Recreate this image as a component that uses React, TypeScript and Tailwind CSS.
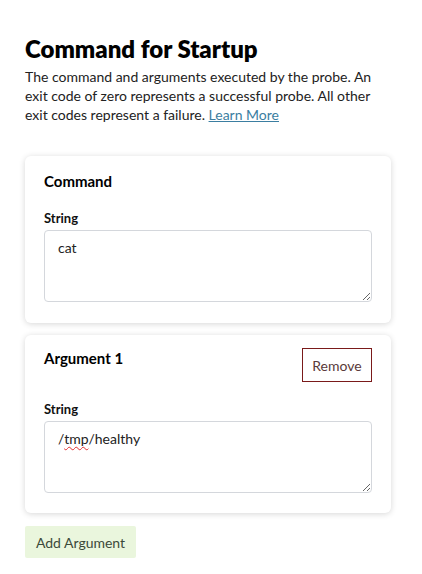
import React from "react";

function Field({ children }: { children: React.ReactNode }) {
  return (
    <div className="flex flex-col">
      <div className="text-[13px] font-bold text-[#111] leading-[18px] mb-[3px]">String</div>
      <div className="h-[72px] w-full resize overflow-auto rounded-[4px] border border-[#d4d7dc] bg-white px-[13px] pt-[7px] text-[14px] text-[#222] leading-[20px]">
        {children}
      </div>
    </div>
  );
}

export default function App() {
  return (
    <div className="min-h-[574px] bg-white pl-[25px] pr-[31px] pt-[34px] pb-4" style={{ fontFamily: "Lato, 'Noto Sans', sans-serif" }}>
      <h1 className="text-[24px] font-extrabold leading-[30px] text-black">Command for Startup</h1>
      <p className="mt-[3px] text-[14px] leading-[19px] text-[#222]">
        The command and arguments executed by the probe. An exit code of zero represents a successful probe. All other
        exit codes represent a failure. <a className="text-[#3b7ea1] underline">Learn More</a>
      </p>

      <div className="mt-[32px] flex flex-col gap-[12px]">
        <div className="rounded-[6px] bg-white px-[19px] pt-[15px] pb-[21px] shadow-[0_1px_6px_rgba(0,0,0,0.16)]">
          <div className="text-[15px] font-bold leading-[20px] text-black mb-[18px]">Command</div>
          <Field>cat</Field>
        </div>

        <div className="rounded-[6px] bg-white px-[19px] pt-[13px] pb-[20px] shadow-[0_1px_6px_rgba(0,0,0,0.16)]">
          <div className="flex items-start justify-between">
            <div className="text-[15px] font-bold leading-[20px] text-black">Argument 1</div>
            <button className="h-[34px] w-[70px] border border-[#7a1a1a] bg-white text-[14px] text-[#5a3a3a]">Remove</button>
          </div>
          <div className="mt-[18px]">
            <Field>
              /<span className="underline decoration-wavy decoration-[#e03030] decoration-[1px] underline-offset-[2px]">tmp</span>/healthy
            </Field>
          </div>
        </div>

        <div className="mt-[1px]">
          <button className="h-[32px] w-[111px] rounded-[2px] bg-[#eaf6dd] text-[14px] text-[#3c4a3a]">Add Argument</button>
        </div>
      </div>
    </div>
  );
}
